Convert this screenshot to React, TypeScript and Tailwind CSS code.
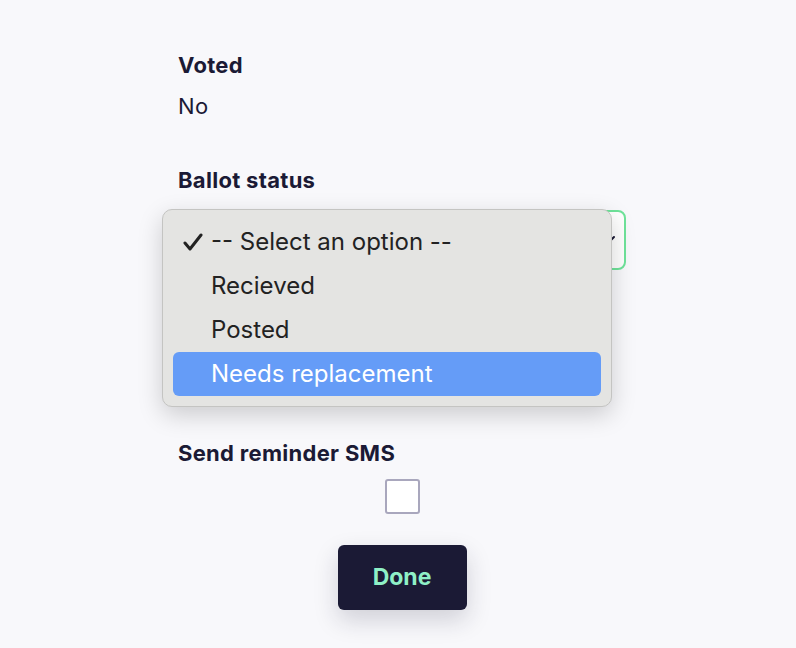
const labelClass = "text-[22px] leading-[28px] font-bold tracking-[0.3px] text-[#1b1a35]";

const options = ["-- Select an option --", "Recieved", "Posted", "Needs replacement"];

const App = () => {
  return (
    <div className="min-h-screen w-full bg-[#f8f8fb] font-['Inter',sans-serif]">
      <div className="ml-[178px] w-[448px] pt-[51px] flex flex-col">
        <span className={labelClass}>Voted</span>
        <span className="mt-[13px] text-[22px] leading-[28px] tracking-[0.3px] text-[#1b1a35]">No</span>

        <span className={`${labelClass} mt-[46px]`}>Ballot status</span>
        <div className="relative mt-[16px]">
          <div className="h-[60px] w-full rounded-[8px] border-2 border-[#6fe39a] bg-white flex items-center justify-end pr-[8px]">
            <svg width="14" height="10" viewBox="0 0 14 10" fill="none" stroke="#1b1a35" strokeWidth="2" strokeLinecap="round">
              <path d="M2 2l5 5 5-5" />
            </svg>
          </div>
          <div className="absolute left-[-16px] top-[-1px] w-[450px] rounded-[10px] border border-[#c4c4c2] bg-[#e4e4e2] p-[10px] shadow-[0_8px_24px_rgba(0,0,0,0.18)]">
            {options.map((o, i) => (
              <div
                key={o}
                className={`h-[44px] rounded-[6px] flex items-center text-[24px] ${i === 3 ? "bg-[#659cf7] text-white" : "text-[#222222]"}`}
              >
                <span className="w-[38px] flex justify-end pr-[8px]">
                  {i === 0 && (
                    <svg width="20" height="18" viewBox="0 0 20 18" fill="none" stroke="#222222" strokeWidth="3" strokeLinecap="round" strokeLinejoin="round">
                      <path d="M2 10l5 6L18 2" />
                    </svg>
                  )}
                </span>
                <span>{o}</span>
              </div>
            ))}
          </div>
        </div>

        <span className={`${labelClass} mt-[169px]`}>Send reminder SMS</span>
        <div className="mt-[12px] flex justify-center">
          <div className="h-[35px] w-[35px] rounded-[3px] border-2 border-[#a9a7bd] bg-white" />
        </div>
        <div className="mt-[31px] flex justify-center">
          <button className="h-[65px] w-[129px] rounded-[6px] bg-[#1b1a35] text-[23px] font-bold text-[#8ff0c7] shadow-[0_10px_24px_rgba(27,26,53,0.18)]">
            Done
          </button>
        </div>
      </div>
    </div>
  );
};

export default App;
